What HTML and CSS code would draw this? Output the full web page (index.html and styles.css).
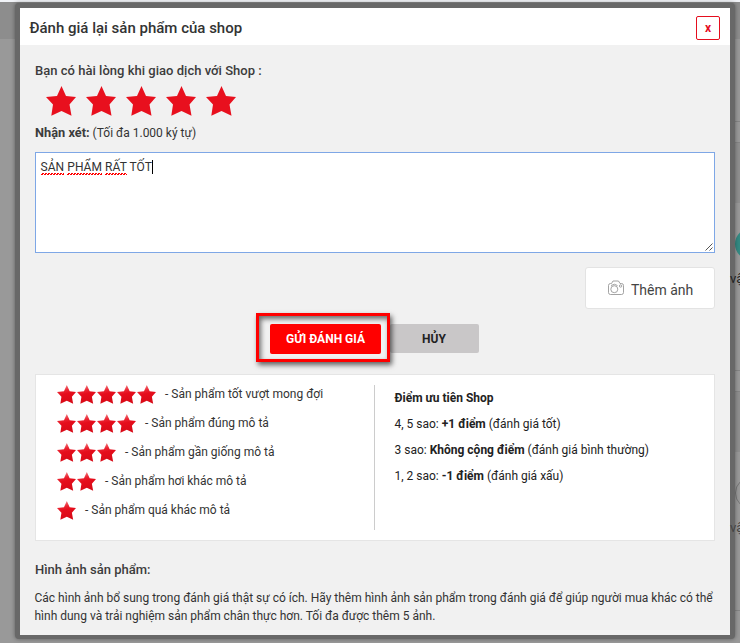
FILE: index.html
```html
<!DOCTYPE html>
<html lang="vi">
<head>
<meta charset="utf-8">
<title>Đánh giá lại sản phẩm của shop</title>
<link rel="stylesheet" href="styles.css">
</head>
<body>
<svg class="defs" width="0" height="0">
  <defs>
    <linearGradient id="shine" x1="0" y1="0" x2="0.25" y2="1">
      <stop offset="0" stop-color="#f8a0a4"/><stop offset=".38" stop-color="#ea2431"/><stop offset=".55" stop-color="#e60d1c"/><stop offset="1" stop-color="#d80a17"/>
    </linearGradient>
    <symbol id="star" viewBox="0 0 30 30"><path d="M15.500 0 L20 10 L30 11 L23.500 18.500 L25.500 29.700 L15.500 25 L5.300 29.700 L7 18.500 L0 11 L11 10 Z"/></symbol>
  </defs>
</svg>
<div class="backdrop">
  <div class="strip"></div>
  <div class="topbar"></div>
  <div class="rule r1"></div><div class="rule r2"></div>
  <div class="rule r3"></div><div class="rule r4"></div><div class="rule r5"></div>
  <div class="block b1"></div><div class="block b2"></div>
  <div class="disc teal"></div><div class="disc ring"></div>
</div>
<main class="modal">
  <header class="head"><h1>Đánh giá lại sản phẩm của shop</h1><button class="close">x</button></header>
  <div class="body">
    <h2 class="ask">Bạn có hài lòng khi giao dịch với Shop :</h2>
    <div class="rating">
      <svg><use href="#star"/></svg><svg><use href="#star"/></svg><svg><use href="#star"/></svg><svg><use href="#star"/></svg><svg><use href="#star"/></svg>
    </div>
    <div class="label"><b>Nhận xét:</b> (Tối đa 1.000 ký tự)</div>
    <div class="comment"><span class="miss">SẢN</span> <span class="miss">PHẨM</span> <span class="miss">RẤT</span> TỐT<i class="caret"></i>
      <svg class="grip" viewBox="0 0 8 8"><path d="M0.500 7.500L7.500.5M4.500 7.500L7.500 4.500"/></svg>
    </div>
    <div class="upload">
      <button class="add"><svg class="camera" viewBox="0 0 16 16"><path d="M2.500 3.500H3.500L5 1h5.500L12 3.500h1.500a2 2 0 0 1 2 2v7a2 2 0 0 1-2 2h-11a2 2 0 0 1-2-2v-7a2 2 0 0 1 2-2z"/><circle cx="6.300" cy="9.200" r="3.500"/><path d="M3 5.500Q6.500 3 9.500 5.500"/><circle cx="12.600" cy="6" r="1.200"/></svg>Thêm ảnh</button>
    </div>
    <div class="actions">
      <div class="mark"><button class="btn send">GỬI ĐÁNH GIÁ</button></div><button class="btn cancel">HỦY</button>
    </div>
    <section class="guide">
      <ul class="levels">
        <li><svg><use href="#star"/></svg><svg><use href="#star"/></svg><svg><use href="#star"/></svg><svg><use href="#star"/></svg><svg><use href="#star"/></svg><span>- Sản phẩm tốt vượt mong đợi</span></li>
        <li><svg><use href="#star"/></svg><svg><use href="#star"/></svg><svg><use href="#star"/></svg><svg><use href="#star"/></svg><span>- Sản phẩm đúng mô tả</span></li>
        <li><svg><use href="#star"/></svg><svg><use href="#star"/></svg><svg><use href="#star"/></svg><span>- Sản phẩm gần giống mô tả</span></li>
        <li><svg><use href="#star"/></svg><svg><use href="#star"/></svg><span>- Sản phẩm hơi khác mô tả</span></li>
        <li><svg><use href="#star"/></svg><span>- Sản phẩm quá khác mô tả</span></li>
      </ul>
      <div class="points">
        <p><b>Điểm ưu tiên Shop</b></p>
        <p>4, 5 sao: <b>+1 điểm</b> (đánh giá tốt)</p>
        <p>3 sao: <b>Không cộng điểm</b> (đánh giá bình thường)</p>
        <p>1, 2 sao: <b>-1 điểm</b> (đánh giá xấu)</p>
      </div>
    </section>
    <h2 class="photos">Hình ảnh sản phẩm:</h2>
    <p class="note">Các hình ảnh bổ sung trong đánh giá thật sự có ích. Hãy thêm hình ảnh sản phẩm trong đánh giá để giúp người mua khác có thể<br>hình dung và trải nghiệm sản phẩm chân thực hơn. Tối đa được thêm 5 ảnh.</p>
  </div>
</main>
<span class="peek p1">vậ</span><span class="peek p2">vậ</span>
</body>
</html>
```
FILE: styles.css
```css
* { box-sizing: border-box; }
body { margin: 0; width: 740px; height: 643px; overflow: hidden; position: relative; font: 12px/18px Roboto, "Liberation Sans", sans-serif; color: #333; background: #999; }
h1, h2, p, ul { margin: 0; padding: 0; }
button { font-family: inherit; padding: 0; }
b { font-weight: 700; }
.defs { position: absolute; }
.backdrop { position: absolute; inset: 0; overflow: hidden; }
.strip { height: 2px; background: #f1f3f7; }
.topbar { height: 37px; background: #8d8d8d; }
.rule { position: absolute; right: 0; width: 12px; height: 1px; background: #858585; }
.r1 { top: 121px; } .r2 { top: 142px; } .r3 { top: 370px; } .r4 { top: 391px; } .r5 { top: 610px; }
.block { position: absolute; right: 0; width: 12px; height: 60px; background: #8f8f8f; }
.b1 { top: 143px; } .b2 { top: 392px; }
.disc { position: absolute; left: 735px; width: 32px; height: 32px; border-radius: 50%; }
.teal { top: 228px; background: #348a83; }
.ring { top: 477px; border: 1px solid #777; }
.modal { position: absolute; left: 15px; top: 3px; width: 720px; height: 636px; border: 5px solid #686868; border-bottom-width: 4px; border-radius: 4px; background: #f1f1f1; box-shadow: 0 0 4px rgba(0,0,0,.4); }
.head { height: 37px; background: #fff; display: flex; justify-content: space-between; align-items: center; padding: 3px 10px 0 9.5px; }
h1 { font-size: 15px; line-height: 20px; font-weight: 500; color: #333; }
.close { width: 24px; height: 24px; border: 1px solid #e50e1e; border-radius: 2px; background: #fff; color: #e50e1e; font-size: 12px; font-weight: 700; }
.body { padding: 17px 15px 0; }
h2 { font-size: 13px; line-height: 18px; font-weight: 500; color: #3c3c3c; }
.ask { letter-spacing: .02px; }
.rating { display: flex; gap: 10px; margin: 6px 0 8px 10.500px; fill: #e8101e; }
.rating svg { width: 30px; height: 30px; }
.label { height: 18px; }
.label b { font-size: 12.800px; color: #3c3c3c; }
.comment { position: relative; margin-top: 10px; height: 101px; background: #fff; border: 1px solid #7ea7e6; padding: 5px 4.500px; line-height: 18px; letter-spacing: .06px; }
.miss { padding-bottom: 1px; background: conic-gradient(from 0deg at 50% 50%, #f00 25%, transparent 0 50%, #f00 0 75%, transparent 0) left bottom / 3px 2px repeat-x; }
.caret { display: inline-block; width: 1px; height: 14px; background: #000; vertical-align: -3px; }
.grip { position: absolute; right: 1px; bottom: 1px; width: 8px; height: 8px; fill: none; stroke: #555; }
.upload { display: flex; justify-content: flex-end; margin-top: 14px; }
.add { width: 130px; height: 42px; background: #fff; border: 1px solid #e3e3e3; border-radius: 3px; display: flex; align-items: center; padding: 4px 0 0 22px; gap: 7px; font-size: 14px; color: #444; }
.camera { width: 16px; height: 16px; fill: none; stroke: #999; stroke-width: .9; margin-top: -4px; }
.actions { display: flex; align-items: center; margin: 4px 0 0 221px; height: 49px; }
.mark { width: 134px; height: 49px; border: 3px solid #f00; padding: 8px 0 0 11px; box-shadow: 2px 3px 5px rgba(0,0,0,.6), inset 2px 3px 5px rgba(0,0,0,.55); z-index: 1; }
.btn { border: 0; border-radius: 2px; font-size: 12px; font-weight: 700; display: block; }
.send { width: 111px; height: 30px; background: #f00; color: #fff; }
.cancel { width: 89px; height: 29px; margin: 2px 0 0 -.5px; background: #c9c7c8; color: #222; }
.guide { margin-top: 12px; height: 167px; background: #fff; border: 1px solid #e5e5e5; display: flex; padding: 10px 0; }
.levels { list-style: none; width: 339px; padding-left: 20.500px; border-right: 1px solid #ccc; }
.levels li { display: flex; align-items: center; gap: 1px; height: 19px; margin-bottom: 10px; }
.levels svg { width: 19px; height: 19px; margin-top: -1px; fill: url(#shine); }
.levels span { margin: -2px 0 0 8.500px; }
.points { padding: 4px 0 0 19.500px; color: #222; }
.points p { margin-bottom: 8px; }
.photos { margin-top: 20px; }
.note { margin: 10px 0 0 -.5px; white-space: nowrap; letter-spacing: -.008px; }
.peek { position: absolute; left: 730px; color: #222; font-size: 13px; }
.p1 { top: 270px; } .p2 { top: 519px; color: #444; }
```
